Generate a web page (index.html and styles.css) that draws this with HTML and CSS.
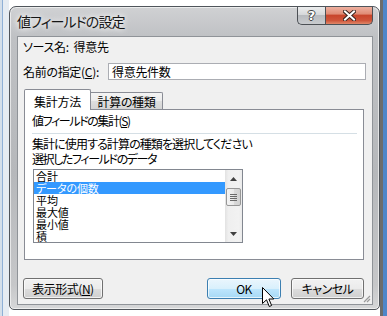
FILE: index.html
```html
<!DOCTYPE html>
<html lang="ja">
<head>
<meta charset="utf-8">
<title>値フィールドの設定</title>
<link rel="stylesheet" href="styles.css">
</head>
<body>
<div class="window">
  <div class="titlebar">
    <span class="title">値フィールドの設定</span>
    <div class="caption">
      <div class="cbtn help">?</div>
      <div class="cbtn close">
        <svg width="13" height="11" viewBox="0 0 13 11"><path d="M2 1.5 L11 9.5 M11 1.5 L2 9.5" stroke="#3a2520" stroke-width="4" stroke-linecap="square"/><path d="M2 1.5 L11 9.5 M11 1.5 L2 9.5" stroke="#ffffff" stroke-width="2" stroke-linecap="square"/></svg>
      </div>
    </div>
  </div>
  <div class="client">
    <div class="source">ソース名:  得意先</div>
    <div class="name-row">
      <span class="label">名前の指定(<u>C</u>):</span>
      <div class="textbox">得意先件数</div>
    </div>
    <div class="tabs">
      <div class="tab active">集計方法</div>
      <div class="tab inactive">計算の種類</div>
    </div>
    <div class="panel">
      <div class="ghead">値フィールドの集計(<u>S</u>)</div>
      <div class="sep"></div>
      <div class="line first">集計に使用する計算の種類を選択してください</div>
      <div class="line second">選択したフィールドのデータ</div>
      <div class="listbox">
        <ul class="items">
          <li>合計</li>
          <li class="sel">データの個数</li>
          <li>平均</li>
          <li>最大値</li>
          <li>最小値</li>
          <li>積</li>
        </ul>
        <div class="scrollbar">
          <div class="arrow"><svg width="7" height="4" viewBox="0 0 7 4"><path d="M0 4 L3.5 0 L7 4 Z" fill="#404040"/></svg></div>
          <div class="thumb"><span></span><span></span><span></span><span></span></div>
          <div class="track"></div>
          <div class="arrow"><svg width="7" height="4" viewBox="0 0 7 4"><path d="M0 0 L7 0 L3.5 4 Z" fill="#404040"/></svg></div>
        </div>
      </div>
    </div>
    <div class="buttons">
      <button class="btn btn-format">表示形式(<u>N</u>)</button>
      <button class="btn btn-ok">OK</button>
      <button class="btn btn-cancel">キャンセル</button>
    </div>
    <svg class="grip" width="9" height="9" viewBox="0 0 9 9"><path d="M8 2 L2 8 M8 5 L5 8" stroke="#9a9a9a" stroke-width="1.2"/></svg>
  </div>
</div>
<svg class="cursor" width="13" height="21" viewBox="0 0 13 21"><path d="M0.5 0.5 L0.5 16.5 L4.5 12.8 L7.3 19.5 L9.6 18.5 L6.9 12 L11.8 12 Z" fill="#ffffff" stroke="#000000" stroke-width="1" stroke-linejoin="miter"/></svg>
</body>
</html>
```
FILE: styles.css
```css
* { box-sizing: border-box; }
html, body { margin: 0; padding: 0; }
body {
  width: 387px;
  height: 316px;
  overflow: hidden;
  position: relative;
  padding: 6px 0 0 9px;
  font-family: "Noto Sans CJK JP", sans-serif;
  font-size: 12px;
  font-feature-settings: "palt";
  letter-spacing: -0.3px;
  color: #000;
  background: linear-gradient(to right, #d4dfea 0, #d4dfea 2px, #8fb0d6 2px, #8fb0d6 3px, #e6ecf2 3px, #e6ecf2 9px, #ffffff 9px, #ffffff 380px, #6c6c6c 380px, #6c6c6c 383px, #4f86c9 383px);
}
.window {
  width: 371px;
  height: 304px;
  border: 1px solid #50555b;
  border-radius: 7px 7px 5px 5px;
  padding: 0 6px 4px 7px;
  display: flex;
  flex-direction: column;
  background: linear-gradient(to bottom, #d0d1d3 0%, #bfc1c4 10%, #b6b8bb 55%, #c6c7c9 92%, #d6d7d8 100%);
  box-shadow: inset 0 0 0 1px rgba(255,255,255,0.6);
}
.titlebar {
  height: 29px;
  display: flex;
  justify-content: space-between;
  align-items: flex-start;
  flex: none;
}
.title {
  font-size: 14px;
  line-height: 20px;
  margin-top: 4px;
  letter-spacing: -0.9px;
  color: #151515;
  text-shadow: 0 0 5px #ffffff, 0 0 9px rgba(255,255,255,0.9);
}
.caption { display: flex; }
.cbtn {
  height: 18px;
  border: 1px solid #4c5055;
  border-top: none;
  display: flex;
  align-items: center;
  justify-content: center;
}
.help {
  width: 28px;
  border-right: none;
  border-radius: 0 0 0 5px;
  background: linear-gradient(to bottom, #eceded 0%, #d6d8da 45%, #b8bbbf 50%, #c9cbce 100%);
  color: #fff;
  font: bold 13px/16px "DejaVu Sans", sans-serif;
  letter-spacing: 0;
  text-shadow: -1px 0 #444, 1px 0 #444, 0 -1px #444, 0 1px #444;
}
.close {
  width: 48px;
  border-radius: 0 0 5px 0;
  background: linear-gradient(to bottom, #eeb0a0 0%, #e08d76 40%, #c8462c 50%, #cf553a 80%, #e0886a 100%);
}
.client {
  flex: 1;
  position: relative;
  background: #f0f0f0;
  border: 1px solid #8f9398;
  padding: 2px 6px 0 5px;
  display: flex;
  flex-direction: column;
}
.source { line-height: 16px; white-space: pre; }
.name-row {
  display: flex;
  align-items: center;
  margin-top: 8px;
}
.label { line-height: 16px; }
.textbox {
  margin-left: auto;
  width: 258px;
  height: 17px;
  border: 1px solid #abadb3;
  background: #fff;
  padding-left: 3px;
  line-height: 15px;
}
.tabs {
  display: flex;
  align-items: flex-end;
  height: 21px;
  margin: 9px 0 -1px 1px;
  position: relative;
  z-index: 1;
}
.tab {
  text-align: center;
  border: 1px solid #898c95;
  border-bottom: none;
  line-height: 16px;
}
.tab.active {
  width: 67px;
  height: 21px;
  padding-top: 4px;
  background: #ffffff;
  border-radius: 2px 2px 0 0;
}
.tab.inactive {
  width: 72px;
  height: 17px;
  margin-bottom: 1px;
  padding-top: 1px;
  border-left: none;
  border-radius: 0 2px 0 0;
  background: linear-gradient(to bottom, #f4f4f4 0%, #ececec 50%, #dfdfdf 50%, #d5d5d5 100%);
}
.panel {
  height: 151px;
  margin: 0 2px 0 1px;
  border: 1px solid #898c95;
  background: #ffffff;
  padding: 3px 0 0 7px;
}
.ghead { line-height: 16px; letter-spacing: -1.4px; }
.sep {
  height: 1px;
  margin: 4px 6px 0 0;
  background: #d5dfe5;
}
.line { line-height: 15px; white-space: nowrap; }
.line.first { margin-top: 2px; letter-spacing: -0.9px; }
.line.second { letter-spacing: -1.4px; }
.listbox {
  margin: 3px 0 0 1px;
  width: 210px;
  height: 74px;
  border: 1px solid #828790;
  display: flex;
  background: #fff;
}
.items {
  flex: 1;
  list-style: none;
  margin: 0;
  padding: 0;
  font-size: 11px;
  letter-spacing: -0.1px;
}
.items li {
  height: 12px;
  line-height: 12px;
  padding-left: 2px;
  white-space: nowrap;
}
.items li.sel { background: #3399ff; color: #ffffff; }
.scrollbar {
  width: 17px;
  display: flex;
  flex-direction: column;
  background: linear-gradient(to right, #e2e2e2 0%, #efefef 20%, #f2f2f2 80%, #ebebeb 100%);
}
.arrow {
  height: 17px;
  flex: none;
  display: flex;
  align-items: center;
  justify-content: center;
}
.thumb {
  height: 18px;
  margin: 1px 1px 0 1px;
  border: 1px solid #979797;
  border-radius: 2px;
  background: linear-gradient(to right, #f4f4f4 0%, #e9e9e9 50%, #dadada 51%, #d2d2d2 100%);
  display: flex;
  flex-direction: column;
  align-items: center;
  justify-content: center;
  gap: 1px;
}
.thumb span {
  width: 7px;
  height: 1px;
  background: #6a6a6a;
}
.track { flex: 1; }
.buttons {
  display: flex;
  margin: 18px 2px 0 0;
}
.btn {
  height: 21px;
  padding: 0;
  margin: 0;
  border: 1px solid #707070;
  border-radius: 3px;
  font: inherit;
  font-feature-settings: "palt";
  letter-spacing: -0.5px;
  line-height: 19px;
  text-align: center;
  color: #000;
  background: linear-gradient(to bottom, #f2f2f2 0%, #ebebeb 50%, #dddddd 51%, #cfcfcf 100%);
  box-shadow: inset 0 0 0 1px rgba(255,255,255,0.7);
}
.btn-format { width: 80px; }
.btn-ok {
  width: 74px;
  margin-left: auto;
  border-color: #3c7fb1;
  background: linear-gradient(to bottom, #eaf6fd 0%, #d9f0fc 50%, #bee6fd 51%, #a7d9f5 100%);
}
.btn-cancel { width: 73px; margin-left: 10px; }
.grip {
  position: absolute;
  right: 1px;
  bottom: 1px;
}
.cursor {
  position: absolute;
  left: 262px;
  top: 287px;
}
```
